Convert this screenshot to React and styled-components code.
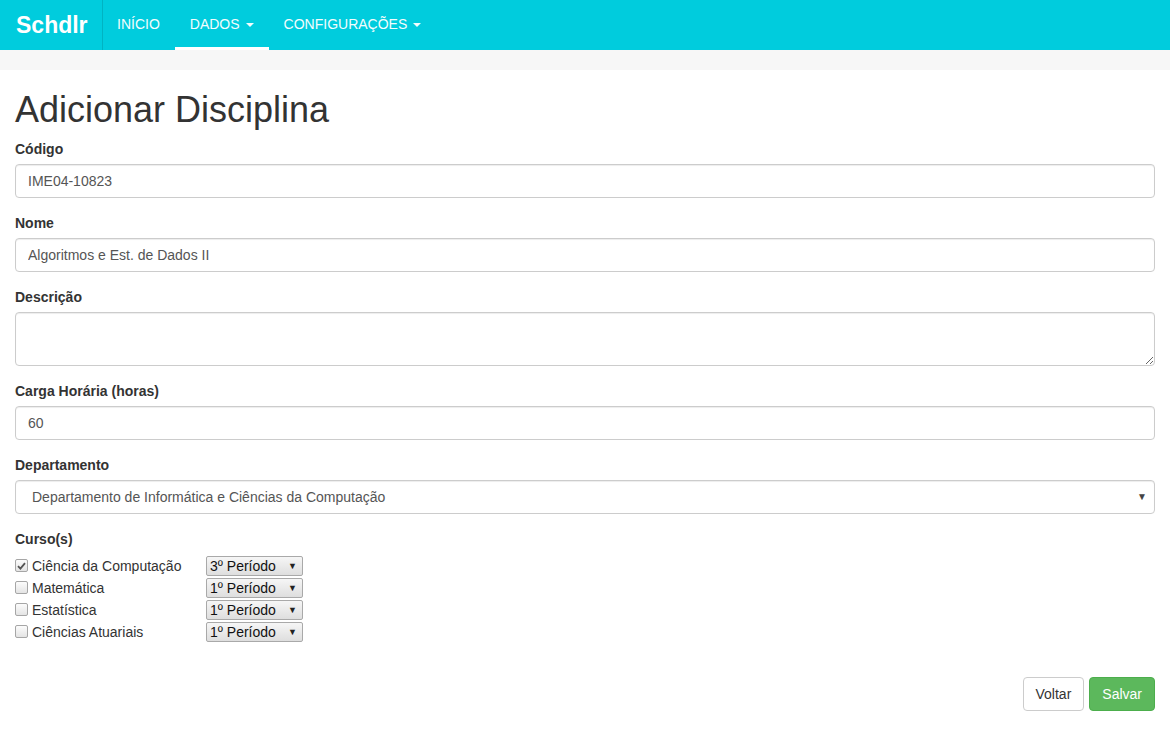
import React from "react";
import styled, { createGlobalStyle } from "styled-components";

const GlobalStyle = createGlobalStyle`
  * { box-sizing: border-box; }
  html, body { margin: 0; padding: 0; background: #fff; }
  body {
    font-family: "Liberation Sans", Arial, Helvetica, sans-serif;
    font-size: 14px;
    line-height: 1.42857;
    color: #333;
  }
`;

const Navbar = styled.nav`
  height: 50px;
  background: #00ccdd;
  display: flex;
  align-items: stretch;
`;

const Brand = styled.a`
  display: flex;
  align-items: center;
  padding: 0 0 0 16px;
  width: 103px;
  border-right: 1px solid #00b3c2;
  font-size: 23px;
  font-weight: bold;
  color: #fff;
  text-decoration: none;
`;

const NavItem = styled.a`
  display: flex;
  align-items: center;
  padding: 0 15px;
  font-size: 14px;
  color: #f2fdfe;
  text-decoration: none;
  border-bottom: 3px solid ${(p) => (p.$active ? "#fff" : "transparent")};
  border-top: 3px solid transparent;
`;

const FirstNav = styled(NavItem)`
  margin-left: -1px;
`;

const Caret = styled.span`
  display: inline-block;
  width: 0;
  height: 0;
  margin-left: 6px;
  vertical-align: middle;
  border-top: 4px solid #f2fdfe;
  border-left: 4px solid transparent;
  border-right: 4px solid transparent;
`;

const Strip = styled.div`
  height: 20px;
  background: #f7f7f7;
`;

const Container = styled.main`
  padding: 0 15px;
`;

const Title = styled.h1`
  margin: 20px 0 9px;
  font-size: 36px;
  font-weight: 500;
  line-height: 1.1;
  color: #333;
`;

const Group = styled.div`
  margin-bottom: 15px;
`;

const Label = styled.label`
  display: block;
  font-weight: bold;
  margin-bottom: 5px;
  line-height: 20px;
`;

const Input = styled.input`
  display: block;
  width: 100%;
  height: 34px;
  padding: 6px 12px;
  font-family: inherit;
  font-size: 14px;
  color: #555;
  background: #fff;
  border: 1px solid #ccc;
  border-radius: 4px;
  box-shadow: inset 0 1px 1px rgba(0, 0, 0, 0.075);
  outline: none;
`;

const TextArea = styled.textarea`
  display: block;
  width: 100%;
  height: 54px;
  padding: 6px 12px;
  font-family: inherit;
  font-size: 14px;
  color: #555;
  border: 1px solid #ccc;
  border-radius: 4px;
  box-shadow: inset 0 1px 1px rgba(0, 0, 0, 0.075);
  resize: vertical;
  outline: none;
`;

const SelectWrap = styled.div`
  position: relative;
`;

const BigSelect = styled.select`
  display: block;
  width: 100%;
  height: 34px;
  padding: 6px 12px 6px 16px;
  font-family: inherit;
  font-size: 14px;
  color: #555;
  background: #fff;
  border: 1px solid #ccc;
  border-radius: 4px;
  box-shadow: inset 0 1px 1px rgba(0, 0, 0, 0.075);
  appearance: none;
  -webkit-appearance: none;
  outline: none;
`;

const Arrow = styled.span`
  position: absolute;
  right: ${(p) => p.$right}px;
  top: 50%;
  transform: translateY(-50%);
  font-size: ${(p) => p.$size}px;
  color: ${(p) => p.$color};
  pointer-events: none;
  line-height: 1;
`;

const CourseGrid = styled.div`
  display: grid;
  grid-template-columns: 191px 97px;
  grid-auto-rows: 22px;
  align-items: center;
  padding-top: 1px;
`;

const CheckLabel = styled.label`
  display: flex;
  align-items: center;
  gap: 4px;
  color: #333;
  line-height: 20px;
`;

const Box = styled.span`
  width: 13px;
  height: 13px;
  border: 1px solid #a6a6a6;
  border-radius: 2px;
  background: linear-gradient(#fcfcfc, #e4e4e4);
  display: inline-flex;
  align-items: center;
  justify-content: center;
  flex: none;
`;

const SmallWrap = styled.div`
  position: relative;
  width: 97px;
  height: 20px;
`;

const SmallSelect = styled.select`
  width: 97px;
  height: 20px;
  padding: 0 0 0 3px;
  font-family: inherit;
  font-size: 14px;
  color: #111;
  border: 1px solid #a9a9a9;
  border-radius: 2px;
  background: linear-gradient(#f6f6f6, #dedede);
  appearance: none;
  -webkit-appearance: none;
  outline: none;
  display: block;
`;

const Actions = styled.div`
  display: flex;
  justify-content: flex-end;
  gap: 5px;
  margin-top: 34px;
`;

const Button = styled.button`
  height: 34px;
  padding: 6px 12px;
  font-family: inherit;
  font-size: 14px;
  line-height: 20px;
  border-radius: 4px;
  border: 1px solid ${(p) => (p.$primary ? "#4cae4c" : "#ccc")};
  background: ${(p) => (p.$primary ? "#5cb85c" : "#fff")};
  color: ${(p) => (p.$primary ? "#fff" : "#333")};
  cursor: pointer;
`;

const courses = [
  { name: "Ciência da Computação", checked: true, period: "3º Período" },
  { name: "Matemática", checked: false, period: "1º Período" },
  { name: "Estatística", checked: false, period: "1º Período" },
  { name: "Ciências Atuariais", checked: false, period: "1º Período" },
];

const periods = ["1º Período", "2º Período", "3º Período", "4º Período"];

function CheckMark() {
  return (
    <svg width="9" height="8" viewBox="0 0 9 8">
      <path d="M1 4.2 L3.4 6.6 L8 1.2" fill="none" stroke="#555" strokeWidth="1.8" />
    </svg>
  );
}

export default function App() {
  return (
    <>
      <GlobalStyle />
      <Navbar>
        <Brand href="#">Schdlr</Brand>
        <FirstNav href="#">INÍCIO</FirstNav>
        <NavItem href="#" $active>
          DADOS <Caret />
        </NavItem>
        <NavItem href="#">
          CONFIGURAÇÕES <Caret />
        </NavItem>
      </Navbar>
      <Strip />
      <Container>
        <Title>Adicionar Disciplina</Title>
        <Group>
          <Label>Código</Label>
          <Input defaultValue="IME04-10823" />
        </Group>
        <Group>
          <Label>Nome</Label>
          <Input defaultValue="Algoritmos e Est. de Dados II" />
        </Group>
        <Group>
          <Label>Descrição</Label>
          <TextArea rows={2} />
        </Group>
        <Group>
          <Label>Carga Horária (horas)</Label>
          <Input defaultValue="60" />
        </Group>
        <Group>
          <Label>Departamento</Label>
          <SelectWrap>
            <BigSelect defaultValue="dicc">
              <option value="dicc">Departamento de Informática e Ciências da Computação</option>
            </BigSelect>
            <Arrow $right={8} $size={10} $color="#444">▼</Arrow>
          </SelectWrap>
        </Group>
        <Group>
          <Label>Curso(s)</Label>
          <CourseGrid>
            {courses.map((c) => (
              <React.Fragment key={c.name}>
                <CheckLabel>
                  <Box>{c.checked && <CheckMark />}</Box>
                  {c.name}
                </CheckLabel>
                <SmallWrap>
                  <SmallSelect defaultValue={c.period}>
                    {periods.map((p) => (
                      <option key={p}>{p}</option>
                    ))}
                  </SmallSelect>
                  <Arrow $right={6} $size={9} $color="#222">▼</Arrow>
                </SmallWrap>
              </React.Fragment>
            ))}
          </CourseGrid>
        </Group>
        <Actions>
          <Button>Voltar</Button>
          <Button $primary>Salvar</Button>
        </Actions>
      </Container>
    </>
  );
}
